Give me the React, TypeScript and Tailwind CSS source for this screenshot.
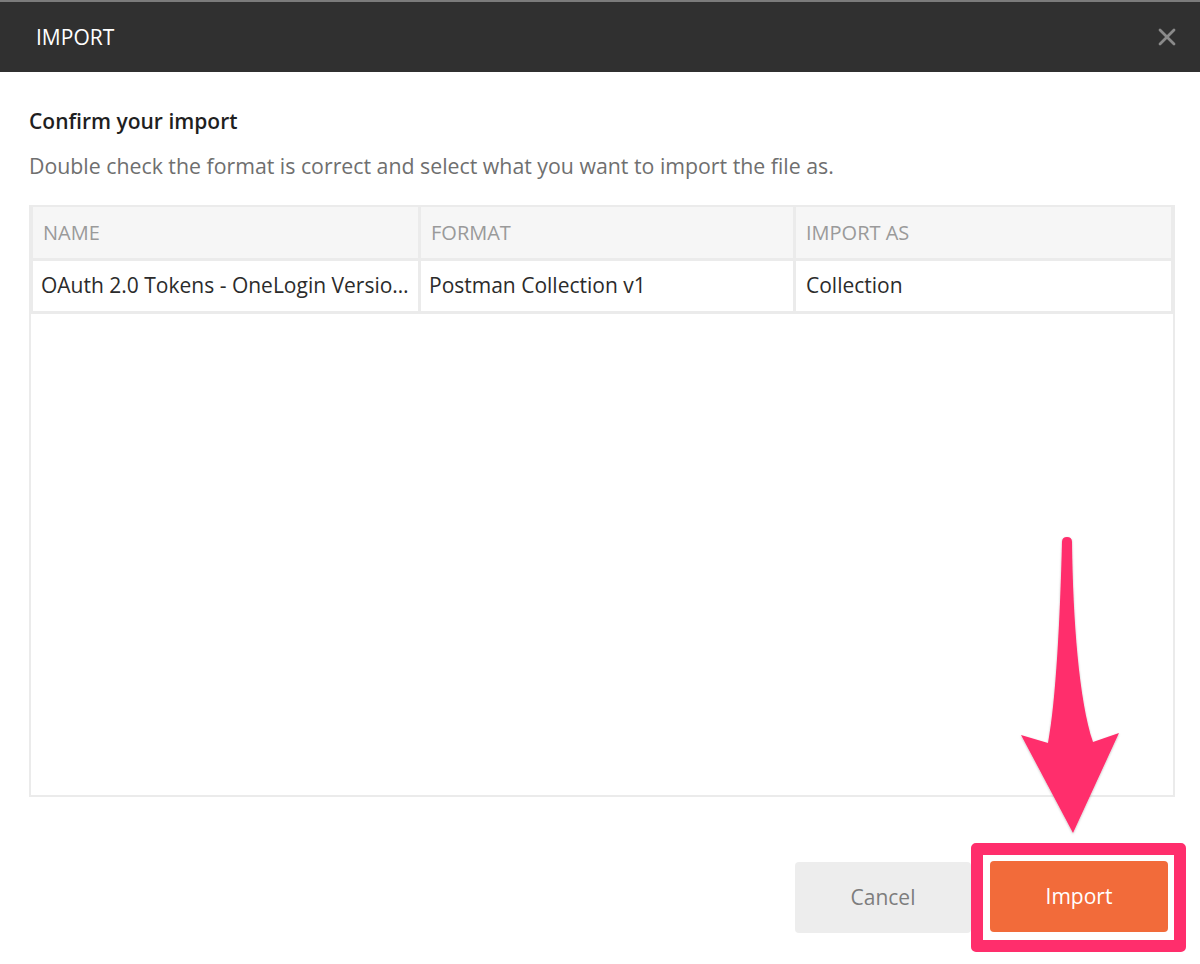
import { X } from 'lucide-react';

const rows = [
  { name: 'OAuth 2.0 Tokens - OneLogin Version 2', format: 'Postman Collection v1', importAs: 'Collection' },
];

export default function App() {
  return (
    <div className="relative w-[1200px] h-[964px] bg-white overflow-hidden" style={{ fontFamily: '"Open Sans", "Noto Sans", sans-serif' }}>
      {/* Header */}
      <div className="h-[72px] border-t-2 border-[#7b7b7b] bg-[#303030] flex items-center justify-between pl-[36px] pr-[19px]">
        <span className="text-white text-[21px] leading-none">IMPORT</span>
        <X className="w-[28px] h-[28px] text-[#8a8a8a]" strokeWidth={2.4} />
      </div>

      {/* Body */}
      <div className="px-[29px]">
        <h2 className="mt-[35px] text-[21px] leading-[28px] font-semibold text-[#1f1f1f]">Confirm your import</h2>
        <p className="mt-[18px] text-[21.3px] leading-[26px] text-[#6f6f6f]">
          Double check the format is correct and select what you want to import the file as.
        </p>

        <div className="mt-[26px] w-[1146px] h-[592px] border-2 border-[#ebebeb]">
          <div className="bg-[#ebebeb] px-[2px] pb-[3px] grid grid-cols-[385px_372px_1fr] gap-[3px]">
            <div className="h-[51px] bg-[#f6f6f6] flex items-center px-[10px] text-[20px] text-[#9a9a9a]">NAME</div>
            <div className="h-[51px] bg-[#f6f6f6] flex items-center px-[10px] text-[20px] text-[#9a9a9a]">FORMAT</div>
            <div className="h-[51px] bg-[#f6f6f6] flex items-center px-[10px] text-[20px] text-[#9a9a9a]">IMPORT AS</div>
            {rows.map(r => (
              <>
                <div key={r.name + 'n'} className="h-[50px] bg-white flex items-center pl-[8px] pr-[4px] text-[21px] text-[#2b2b2b] min-w-0">
                  <span className="truncate" title={r.name}>{r.name}</span>
                </div>
                <div key={r.name + 'f'} className="h-[50px] bg-white flex items-center px-[8px] text-[21px] text-[#2b2b2b]">{r.format}</div>
                <div key={r.name + 'i'} className="h-[50px] bg-white flex items-center px-[10px] text-[21px] text-[#2b2b2b]">{r.importAs}</div>
              </>
            ))}
          </div>
        </div>
      </div>

      {/* Footer */}
      <div className="mt-[46px] flex items-center justify-end pr-[14px]">
        <button className="w-[176px] h-[71px] rounded-[4px] bg-[#ededed] text-[#7d7d7d] text-[21px]">Cancel</button>
        <div className="rounded-[5px] border-[12px] border-[#ff2e6c] bg-white pl-[7px] pr-[6px] pt-[6px] pb-[8px]">
          <button className="w-[178px] h-[71px] rounded-[4px] bg-[#f26b3a] text-white text-[21px]">Import</button>
        </div>
      </div>

      {/* Annotation arrow */}
      <svg className="absolute inset-0 pointer-events-none" width="1200" height="964" viewBox="0 0 1200 964">
        <defs>
          <filter id="sh" x="-20%" y="-20%" width="140%" height="140%">
            <feDropShadow dx="0" dy="1" stdDeviation="1" floodColor="#000" floodOpacity="0.25" />
          </filter>
        </defs>
        <path
          filter="url(#sh)"
          fill="#ff2e6c"
          d="M1062 542 Q1062 537 1067 537 Q1072 537 1072 542 C1073 620 1079 700 1093 742 L1119 733 L1073 833 L1021 735 L1048 743 C1056 700 1060 620 1062 542 Z"
        />
      </svg>
    </div>
  );
}
